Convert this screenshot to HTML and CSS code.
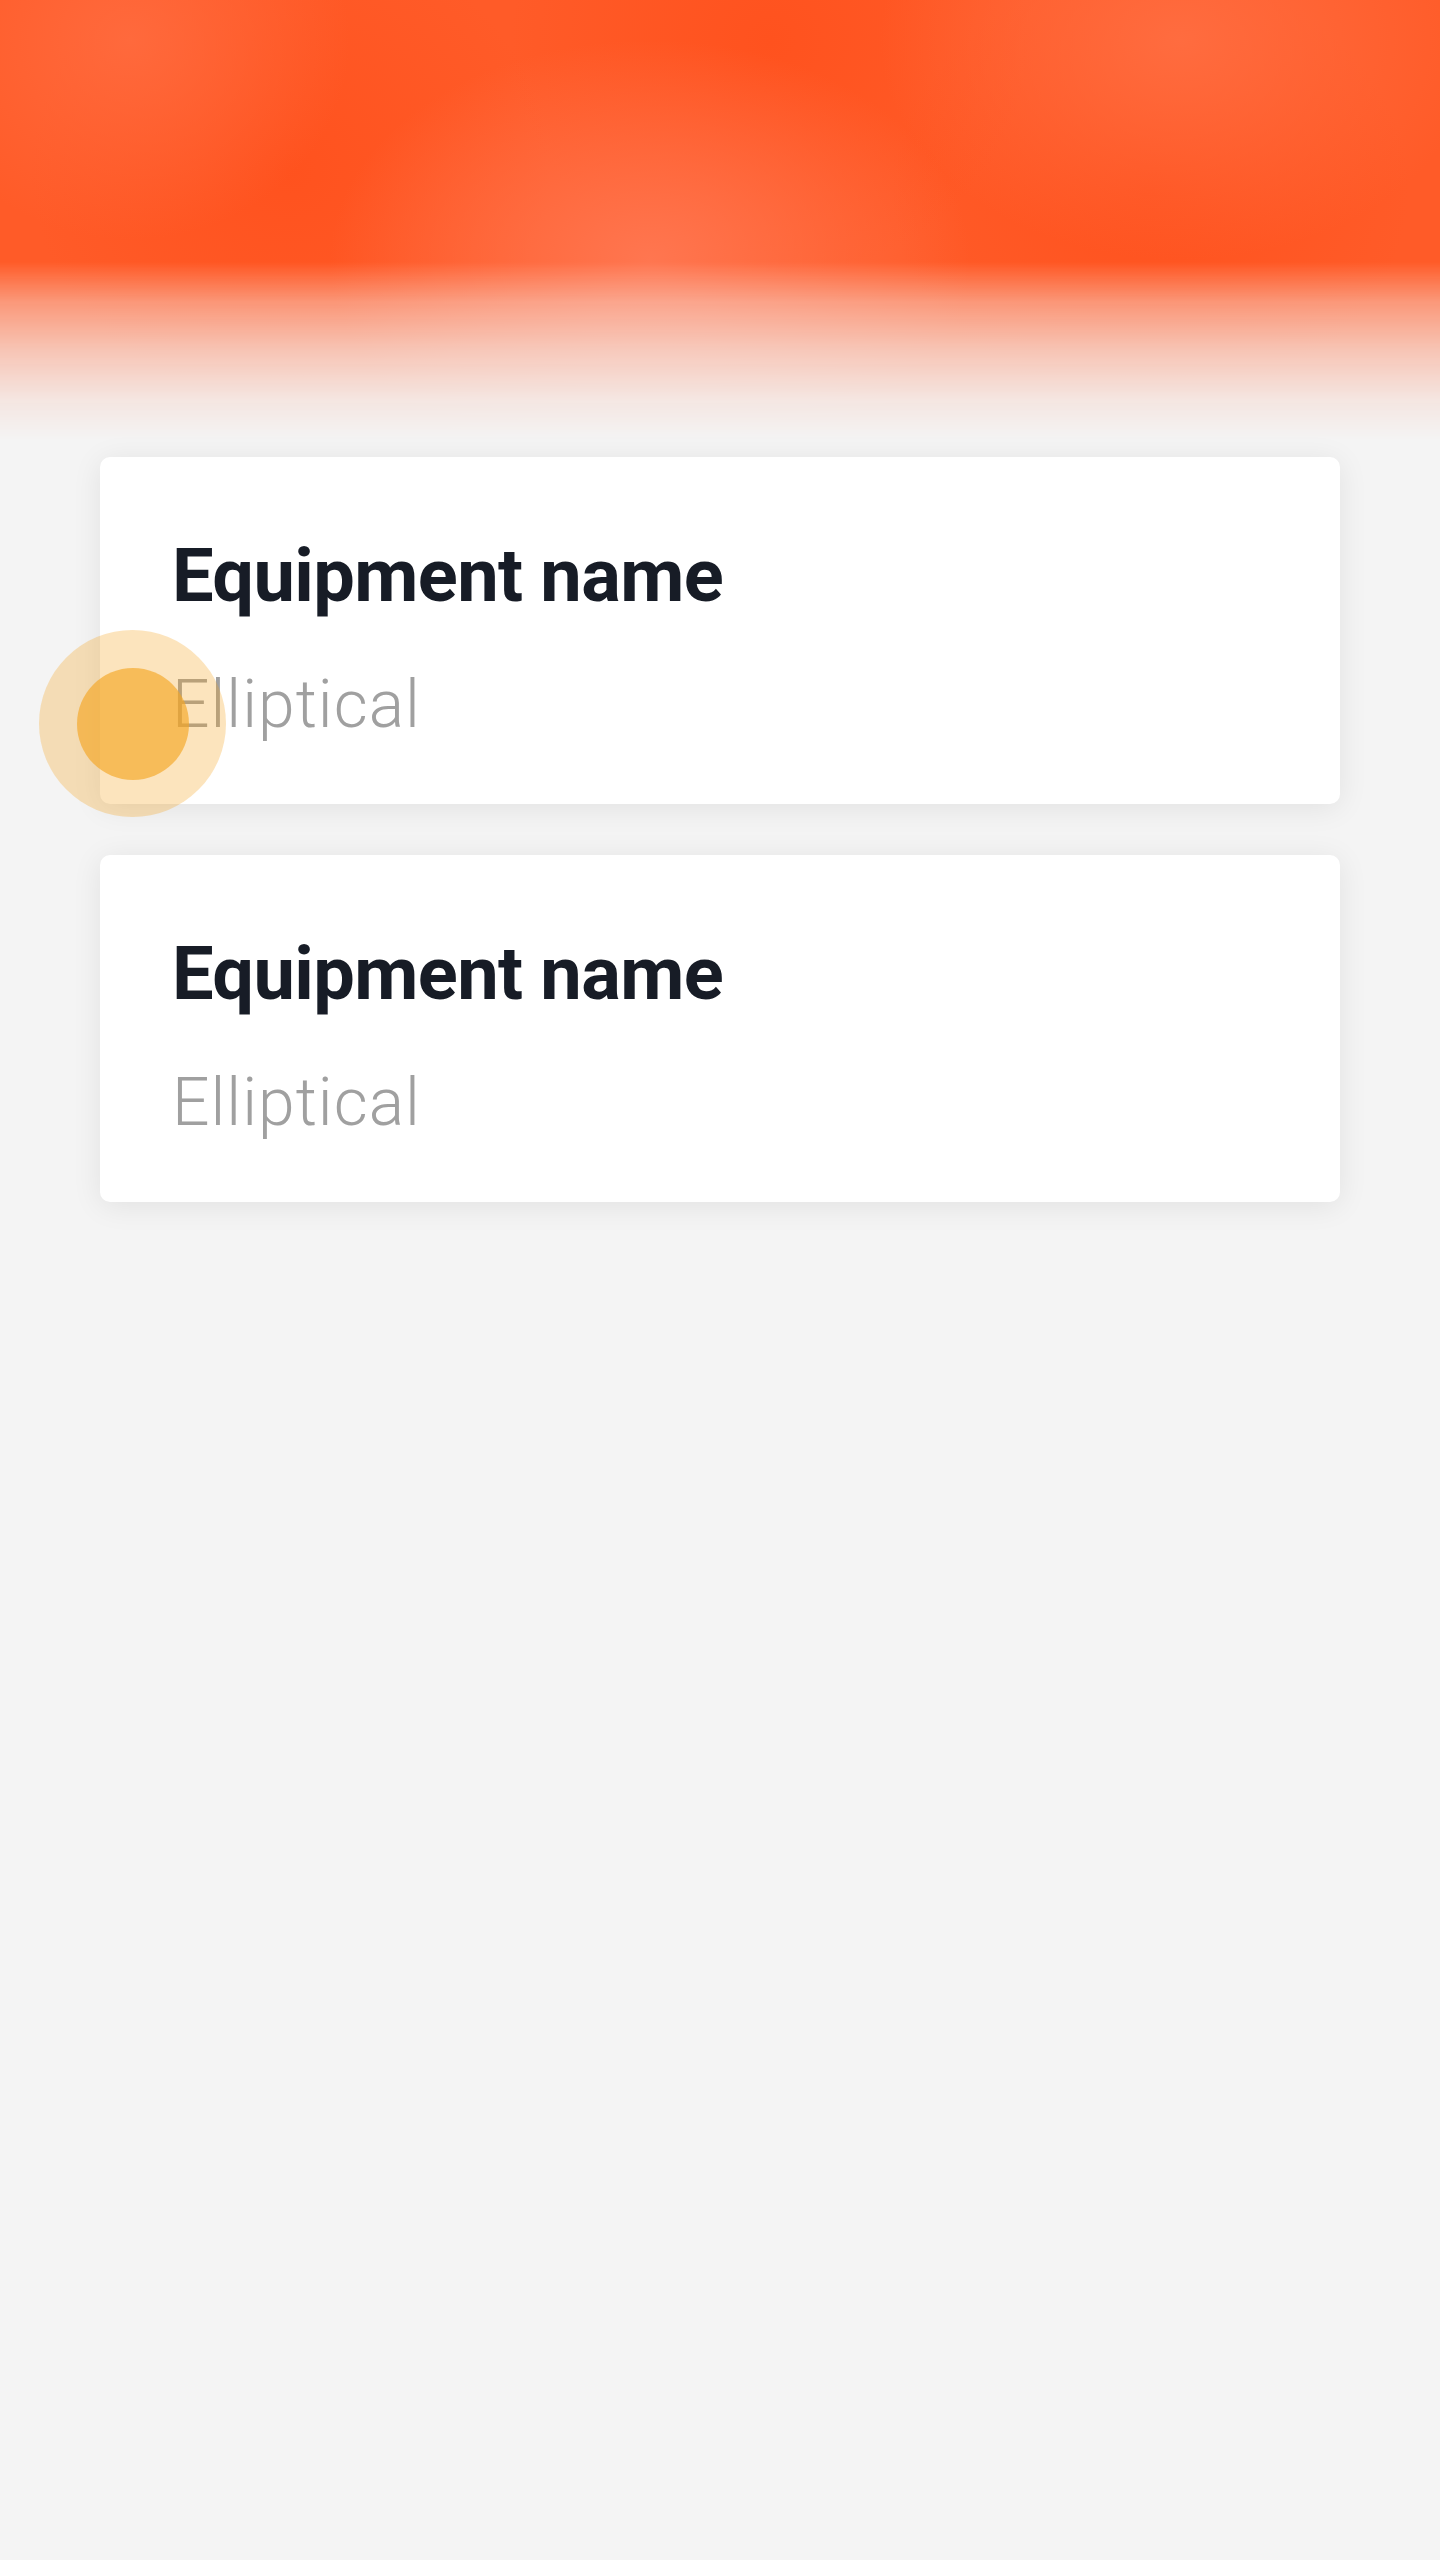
FILE: index.html
```html
<!DOCTYPE html>
<html lang="en">
<head>
<meta charset="utf-8">
<title>Equipment</title>
<link rel="stylesheet" href="styles.css">
</head>
<body>
<div class="page">
  <div class="hero"></div>
  <main class="list">
    <section class="card">
      <h2 class="card-title">Equipment name</h2>
      <p class="card-sub">Elliptical</p>
    </section>
    <section class="card">
      <h2 class="card-title">Equipment name</h2>
      <p class="card-sub">Elliptical</p>
    </section>
  </main>
  <div class="touch">
    <div class="touch-inner"></div>
  </div>
</div>
</body>
</html>
```

FILE: styles.css
```css
html, body {
  margin: 0;
  padding: 0;
  background: #f4f4f4;
}

body {
  font-family: Roboto, "Liberation Sans", sans-serif;
  min-height: 2560px;
}

.page {
  position: relative;
  min-height: 2560px;
}

.hero {
  height: 457px;
  background:
    radial-gradient(ellipse 220px 200px at 130px 40px, rgba(255,108,64,0.85), rgba(255,108,64,0) 100%),
    radial-gradient(ellipse 300px 220px at 1180px 40px, rgba(255,110,66,0.9), rgba(255,110,66,0) 100%),
    radial-gradient(ellipse 320px 220px at 650px 260px, rgba(255,118,80,1), rgba(255,118,80,0) 100%),
    radial-gradient(ellipse 260px 240px at 770px 40px, rgba(255,82,30,1), rgba(255,82,30,0) 100%),
    radial-gradient(ellipse 260px 240px at 290px 170px, rgba(255,82,30,1), rgba(255,82,30,0) 100%),
    radial-gradient(ellipse 260px 220px at 1150px 190px, rgba(255,82,30,1), rgba(255,82,30,0) 100%),
    #ff5b28;
  -webkit-mask-image: linear-gradient(to bottom, #000 0, #000 262px, rgba(0,0,0,0.6) 302px, rgba(0,0,0,0.31) 350px, rgba(0,0,0,0.09) 400px, rgba(0,0,0,0) 440px);
  mask-image: linear-gradient(to bottom, #000 0, #000 262px, rgba(0,0,0,0.6) 302px, rgba(0,0,0,0.31) 350px, rgba(0,0,0,0.09) 400px, rgba(0,0,0,0) 440px);
}

.list {
  display: flex;
  flex-direction: column;
  gap: 51px;
  padding: 0 100px;
}

.card {
  background: #ffffff;
  border-radius: 10px;
  box-shadow: 0 4px 30px rgba(0, 0, 0, 0.08);
  padding: 82px 72px 66px;
  display: flex;
  flex-direction: column;
  gap: 59px;
}

.card-title {
  margin: 0;
  font-size: 74px;
  line-height: 74px;
  font-weight: 700;
  letter-spacing: -0.6px;
  color: #171c26;
}

.card-sub {
  margin: 0;
  font-size: 66px;
  line-height: 66px;
  font-weight: 300;
  letter-spacing: 1px;
  color: #a0a0a0;
}

.touch {
  position: absolute;
  left: 39px;
  top: 630px;
  width: 187px;
  height: 187px;
  border-radius: 50%;
  background: rgba(245, 166, 35, 0.3);
  display: flex;
  align-items: center;
  justify-content: center;
}

.touch-inner {
  width: 112px;
  height: 112px;
  border-radius: 50%;
  background: rgba(245, 166, 35, 0.65);
}
```
